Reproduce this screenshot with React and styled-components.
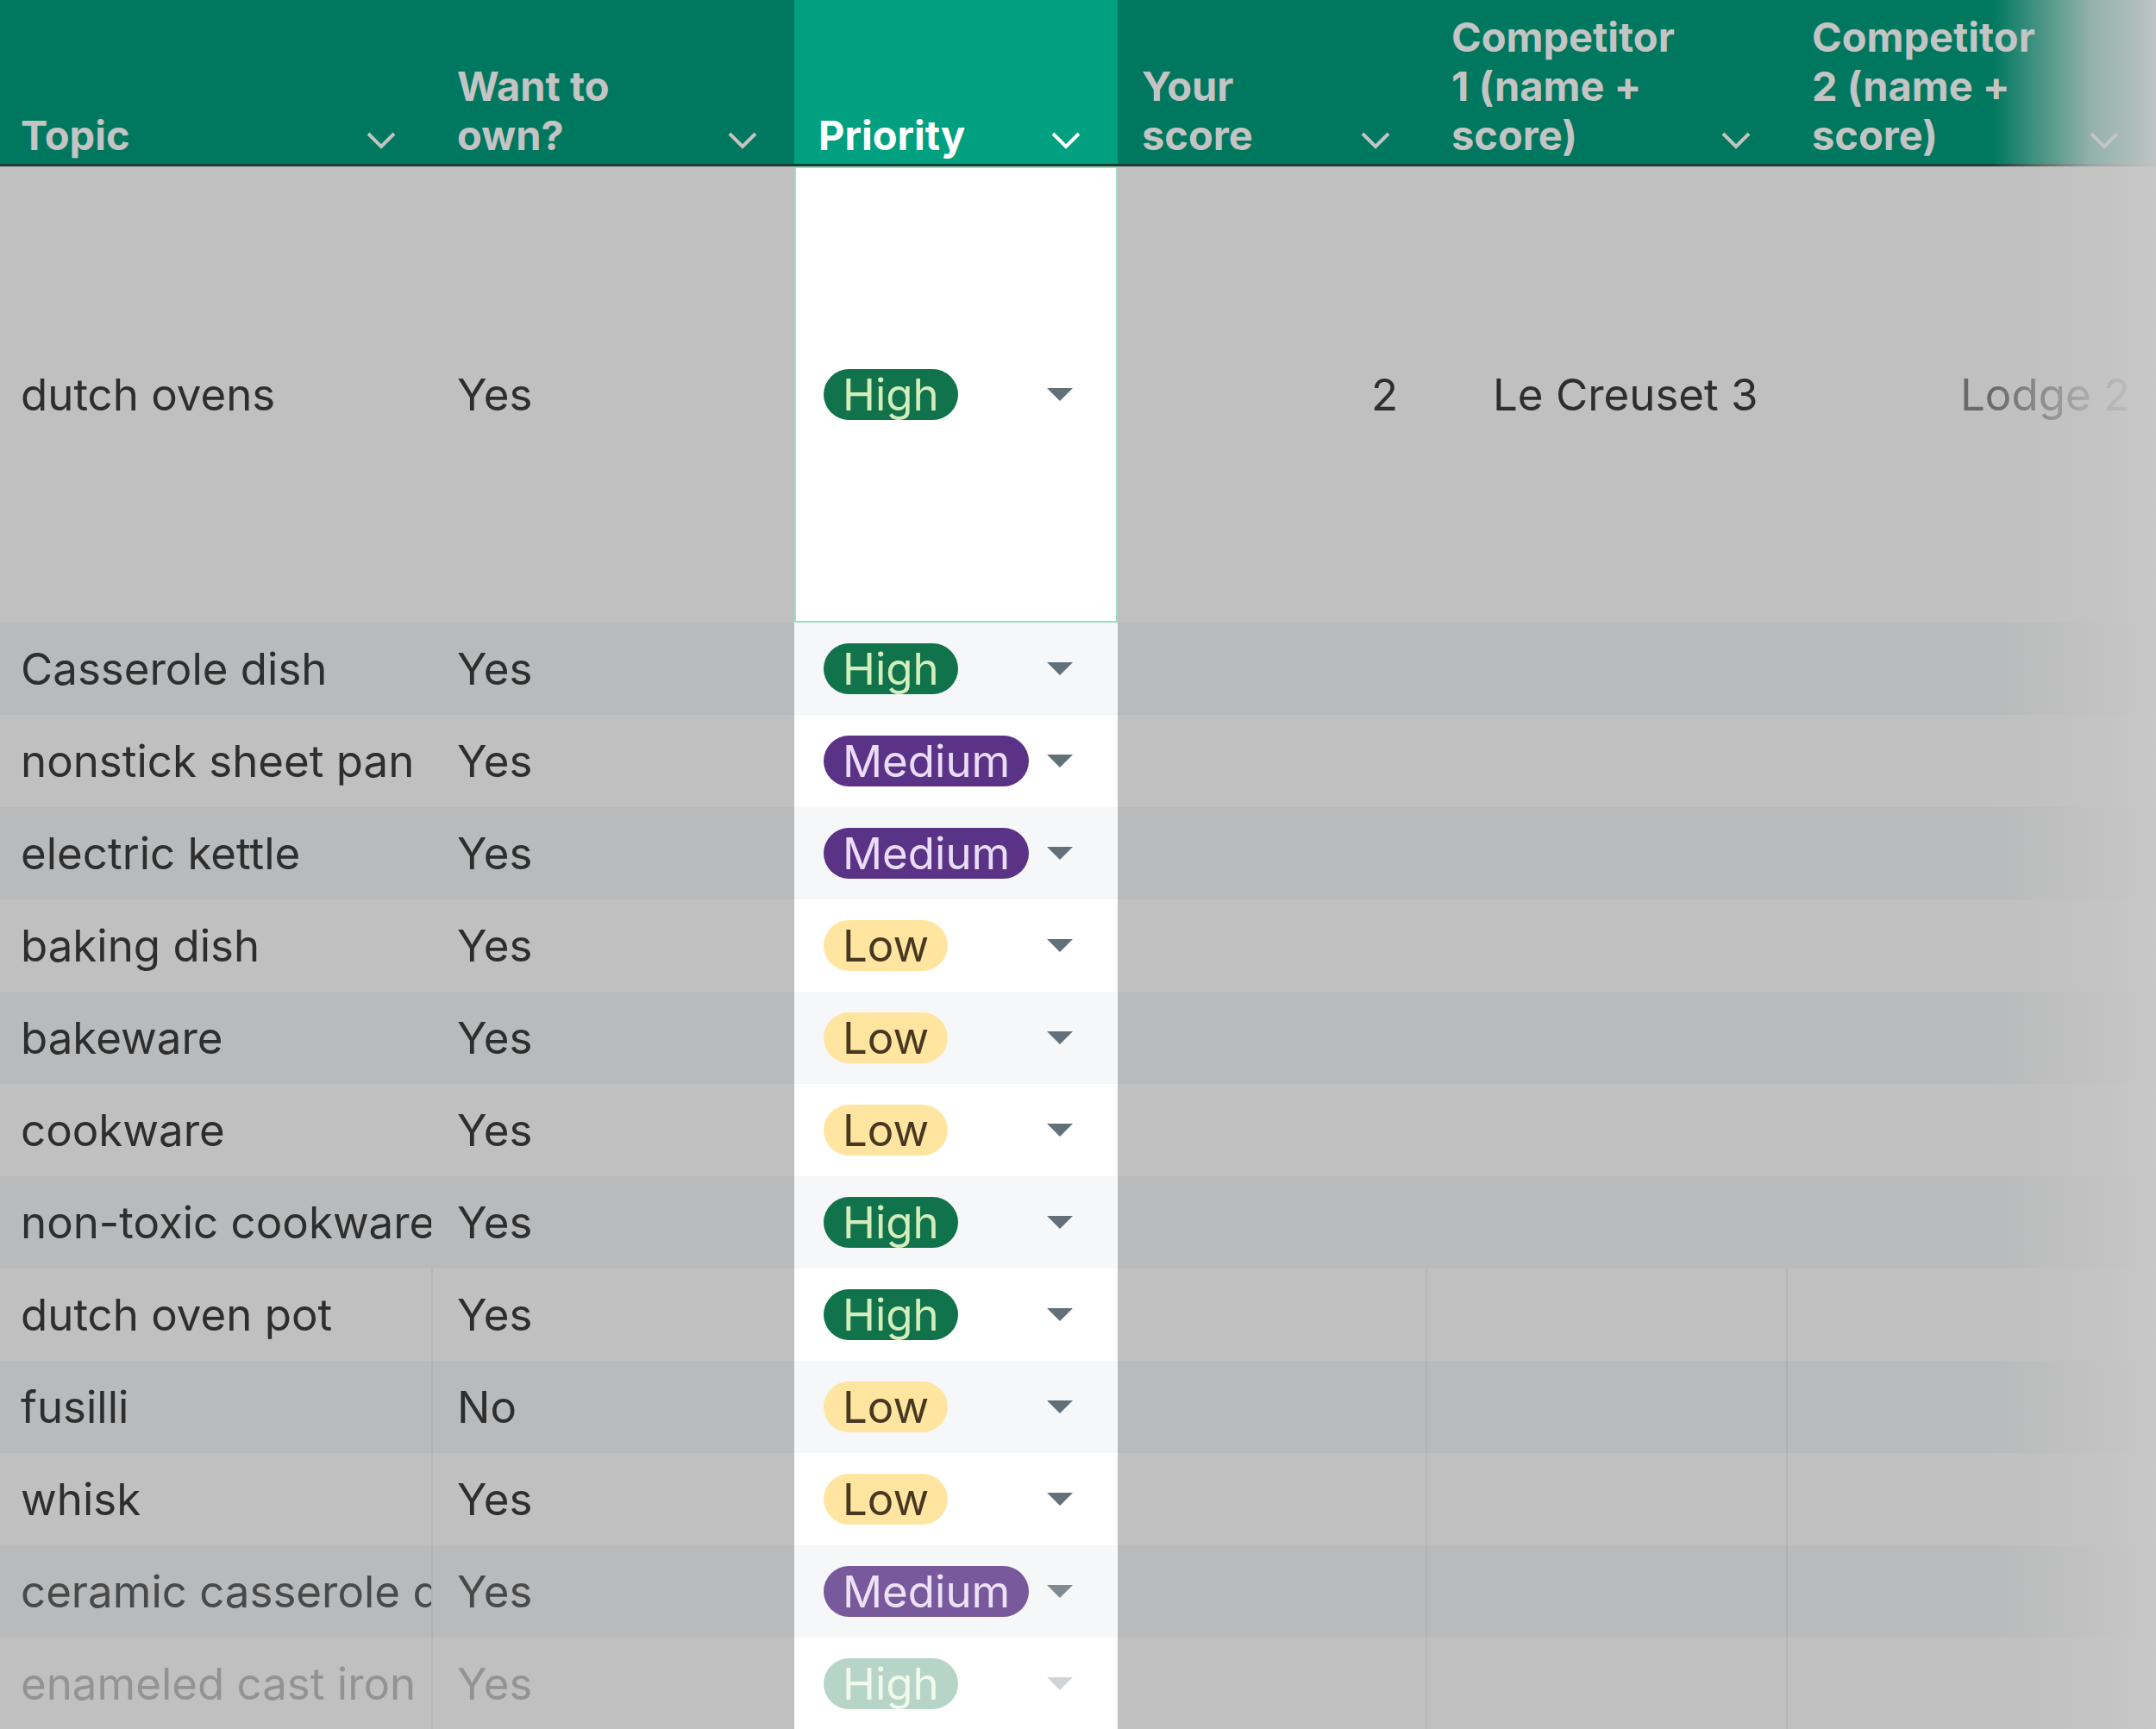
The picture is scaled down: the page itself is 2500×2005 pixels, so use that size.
import styled, { createGlobalStyle } from 'styled-components';

const GlobalStyle = createGlobalStyle`
  html, body { margin: 0; padding: 0; }
  body {
    width: 2500px;
    height: 2005px;
    overflow: hidden;
    background: #c0c0c0;
    font-family: Inter, 'Noto Sans', sans-serif;
  }
`;

const COLS = '502px 419px 375px 359px 418px 427px';

const Sheet = styled.div`
  position: relative;
  width: 2500px;
  height: 2005px;
  overflow: hidden;
`;

const HeaderRow = styled.div`
  display: grid;
  grid-template-columns: ${COLS};
  height: 190px;
  background: #00785f;
  border-bottom: 3px solid #1f3d34;
`;

const HeadCell = styled.div`
  display: flex;
  align-items: flex-end;
  justify-content: space-between;
  padding: 0 42px 5px 28px;
  background: ${p => (p.$active ? '#00a080' : 'transparent')};
  color: ${p => (p.$active ? '#ffffff' : '#c4c4c4')};
  font-weight: 700;
  font-size: 47px;
  line-height: 57px;
  &:first-child { padding-left: 24px; }
`;

const Chevron = ({ color }) => (
  <svg width="36" height="24" viewBox="0 0 36 24" style={{ marginBottom: 10, flexShrink: 0 }}>
    <path d="M3 4 L18 19 L33 4" fill="none" stroke={color} strokeWidth="4" />
  </svg>
);

const Row = styled.div`
  display: grid;
  grid-template-columns: ${COLS};
  height: ${p => p.$h}px;
  background: ${p => (p.$alt ? '#b9babb' : '#c0c0c0')};
`;

const Cell = styled.div`
  display: flex;
  align-items: center;
  padding-left: ${p => p.$pl ?? 28}px;
  padding-right: ${p => p.$pr ?? 0}px;
  justify-content: ${p => (p.$right ? 'flex-end' : 'flex-start')};
  font-size: 51px;
  color: #2e2e2e;
  white-space: nowrap;
  overflow: hidden;
  border-right: 2px solid ${p => (p.$lines ? 'rgba(0,0,0,0.05)' : 'transparent')};
  &:first-child { padding-left: 24px; }
`;

const Faded = styled.span`
  opacity: ${p => p.$fade};
  display: inline-flex;
  align-items: center;
`;

const PriorityCell = styled.div`
  display: flex;
  align-items: center;
  justify-content: space-between;
  padding: 0 38px 0 32px;
  background: ${p => (p.$alt ? '#f5f7f8' : '#ffffff')};
  border: 2px solid ${p => (p.$selected ? '#9fdcc6' : 'transparent')};
`;

const PILL = {
  High: ['#11734b', '#d4edbc'],
  Medium: ['#5a3286', '#eadcf7'],
  Low: ['#ffe5a0', '#473822'],
};

const Pill = styled.span`
  display: inline-flex;
  align-items: center;
  height: 59px;
  padding: 0 22px;
  border-radius: 30px;
  font-size: 51px;
  background: ${p => PILL[p.$level][0]};
  color: ${p => PILL[p.$level][1]};
`;

const Caret = styled.span`
  width: 0;
  height: 0;
  border-left: 15px solid transparent;
  border-right: 15px solid transparent;
  border-top: 15px solid #62707a;
  margin-right: 12px;
`;

const RightFade = styled.div`
  position: absolute;
  top: 0;
  right: 0;
  width: 190px;
  height: 100%;
  pointer-events: none;
  background: linear-gradient(90deg, rgba(196,196,196,0) 0%, rgba(196,196,196,0.75) 60%, rgba(200,200,200,0.95) 100%);
`;

const rows = [
  ['Casserole dish', 'Yes', 'High'],
  ['nonstick sheet pan', 'Yes', 'Medium'],
  ['electric kettle', 'Yes', 'Medium'],
  ['baking dish', 'Yes', 'Low'],
  ['bakeware', 'Yes', 'Low'],
  ['cookware', 'Yes', 'Low'],
  ['non-toxic cookware', 'Yes', 'High'],
  ['dutch oven pot', 'Yes', 'High'],
  ['fusilli', 'No', 'Low'],
  ['whisk', 'Yes', 'Low'],
  ['ceramic casserole dish', 'Yes', 'Medium'],
  ['enameled cast iron', 'Yes', 'High'],
];

const heads = ['Topic', 'Want to\nown?', 'Priority', 'Your\nscore', 'Competitor\n1 (name +\nscore)', 'Competitor\n2 (name +\nscore)'];

export default function App() {
  return (
    <Sheet>
      <GlobalStyle />
      <HeaderRow>
        {heads.map((h, i) => (
          <HeadCell key={h} $active={i === 2}>
            <span style={{ whiteSpace: 'pre' }}>{h}</span>
            <Chevron color={i === 2 ? '#ffffff' : '#c4c4c4'} />
          </HeadCell>
        ))}
      </HeaderRow>
      <Row $h={529}>
        <Cell>dutch ovens</Cell>
        <Cell>Yes</Cell>
        <PriorityCell $selected><Pill $level="High">High</Pill><Caret /></PriorityCell>
        <Cell $right $pr={32}>2</Cell>
        <Cell $pl={76}>Le Creuset 3</Cell>
        <Cell $pl={200} style={{ color: '#6a6a6a' }}>Lodge 2</Cell>
      </Row>
      {rows.map(([t, w, p], i) => {
        const lines = i >= 7;
        const fade = i === 11 ? 0.3 : i === 10 ? 0.8 : 1;
        return (
          <Row key={t} $h={107} $alt={i % 2 === 0}>
            <Cell $lines={lines}><Faded $fade={fade}>{t}</Faded></Cell>
            <Cell><Faded $fade={fade}>{w}</Faded></Cell>
            <PriorityCell $alt={i % 2 === 0 && i < 11}>
              <Faded $fade={fade}><Pill $level={p}>{p}</Pill></Faded>
              <Faded $fade={fade}><Caret /></Faded>
            </PriorityCell>
            <Cell $lines={lines} />
            <Cell $lines={lines} />
            <Cell />
          </Row>
        );
      })}
      <RightFade />
    </Sheet>
  );
}
